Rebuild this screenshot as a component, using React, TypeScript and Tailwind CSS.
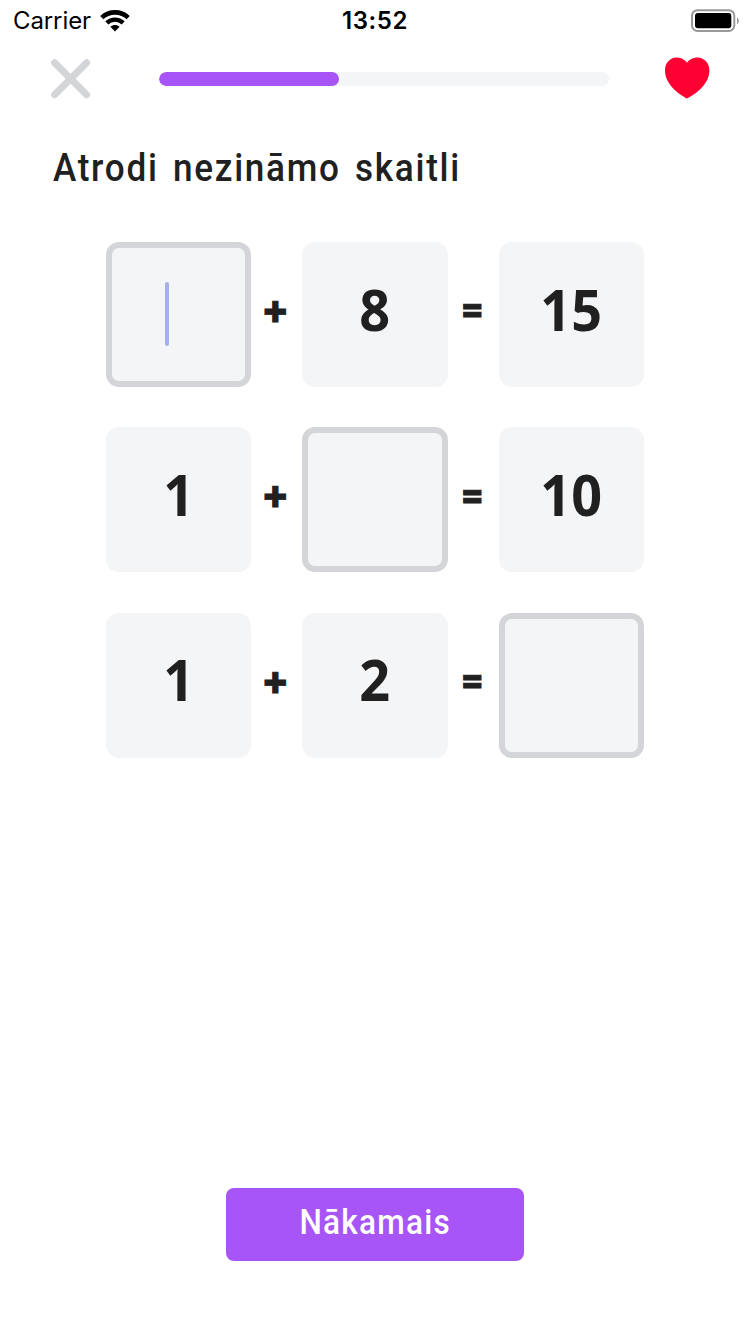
type Cell = { value?: string; active?: boolean };
type Equation = [Cell, Cell, Cell];

const equations: Equation[] = [
  [{ active: true }, { value: "8" }, { value: "15" }],
  [{ value: "1" }, {}, { value: "10" }],
  [{ value: "1" }, { value: "2" }, {}],
];

function StatusBar() {
  return (
    <div className="grid h-10 grid-cols-3 items-center font-['Inter',sans-serif] text-black">
      <div className="flex items-center gap-[9px] pl-[13px]">
        <span className="pt-[1px] text-[24px] leading-10 tracking-[-0.1px]">Carrier</span>
        <svg width="30" height="22" viewBox="0 0 30 22" fill="none" stroke="black">
          <path d="M1.8 7.6C9.2 .6 20.8 .6 28.2 7.6" strokeWidth="4.6" />
          <path d="M6.8 12.9c4.6-4.4 11.8-4.4 16.4 0" strokeWidth="4.4" />
          <path d="M10.4 16.8c2.8-2.5 6.4-2.5 9.2 0L15 21.4z" fill="black" stroke="none" />
        </svg>
      </div>
      <span className="pt-[1px] text-center text-[24px] leading-10 font-semibold tracking-[0.6px]">13:52</span>
      <svg className="mr-[10px] justify-self-end" width="50" height="24" viewBox="0 0 50 24">
        <rect x="2" y="1.2" width="42.3" height="20.8" rx="5.5" fill="none" stroke="#999" strokeWidth="2" />
        <rect x="5" y="4" width="36.3" height="15.2" rx="3" fill="black" />
        <path d="M47 8.2c2.3 1.5 2.3 5.7 0 7.2z" fill="#999" />
      </svg>
    </div>
  );
}

function Header() {
  return (
    <header className="flex h-[77px] items-center pr-[40px] pl-[51px]">
      <svg width="40" height="40" viewBox="0 0 40 40" stroke="#d3d5d8" strokeWidth="7" strokeLinecap="round">
        <path d="M3.6 3.8l32 32M35.6 3.8l-32 32" />
      </svg>
      <div className="ml-[68px] h-[14px] w-[450px] overflow-hidden rounded-full bg-[#f3f5f7]">
        <div className="h-full w-2/5 rounded-full bg-[#a855f7]" />
      </div>
      <svg className="mb-[1px] ml-auto" width="46" height="42" viewBox="0 0 46 42" fill="#ff0032">
        <path d="M23 41.5C18 39 1 29 1 13.5 1 6 6 .5 12.4.5 17 .5 20.9 2.6 23 5.8 25.1 2.6 29 .5 33.6.5 40 .5 45.4 6 45.4 13.5 45.4 29 28 39 23 41.5z" />
      </svg>
    </header>
  );
}

function Box({ value, active }: Cell) {
  if (!value) {
    return (
      <div className="flex h-[145px] items-center rounded-[13px] border-6 border-[#d3d5d8] bg-[#f3f5f7] pb-px pl-[53px]">
        {active && <div className="h-16 w-1 rounded-full bg-[#a5b0ec]" />}
      </div>
    );
  }
  return (
    <div className="flex h-[145px] items-center justify-center rounded-[13px] bg-[#f3f5f7] pb-[13px] font-['Open_Sans',sans-serif] text-[58px] font-bold">
      <span className="-ml-[1px] scale-x-[0.93]">{value}</span>
    </div>
  );
}

function Plus() {
  return (
    <span className="flex items-center justify-center pr-[3px] pb-[8px] font-['Open_Sans',sans-serif] text-[42px] font-extrabold [-webkit-text-stroke:0.8px]">
      +
    </span>
  );
}

function Equals() {
  return (
    <span className="flex items-center justify-center pr-[2px] pb-[8px] font-['Open_Sans',sans-serif] text-[35px] font-extrabold [-webkit-text-stroke:1px]">
      =
    </span>
  );
}

export default function App() {
  return (
    <div className="flex h-[1334px] w-[750px] flex-col bg-white text-[#202020]">
      <StatusBar />
      <Header />
      <h1 className="mt-[21px] ml-[53px] h-[60px] origin-left scale-x-[0.9] font-['Roboto',sans-serif] text-[39px] leading-[60px] font-medium tracking-[1.9px] whitespace-nowrap [word-spacing:4.5px]">
        Atrodi nezināmo skaitli
      </h1>
      <main className="mx-auto mt-[44px] flex w-[538px] flex-1 flex-col gap-[40.4px]">
        {equations.map(([a, b, c], i) => (
          <div key={i} className="grid h-[145px] grid-cols-[1fr_51px_1fr_51px_1fr]">
            <Box {...a} />
            <Plus />
            <Box {...b} />
            <Equals />
            <Box {...c} />
          </div>
        ))}
      </main>
      <button className="mx-auto mb-[73px] h-[73px] w-[298px] rounded-[8px] bg-[#a855f7] pb-[5px] font-['Roboto',sans-serif] text-[35px] leading-none font-medium text-white">
        <span className="inline-block scale-x-[0.9] tracking-[1.4px]">Nākamais</span>
      </button>
    </div>
  );
}
